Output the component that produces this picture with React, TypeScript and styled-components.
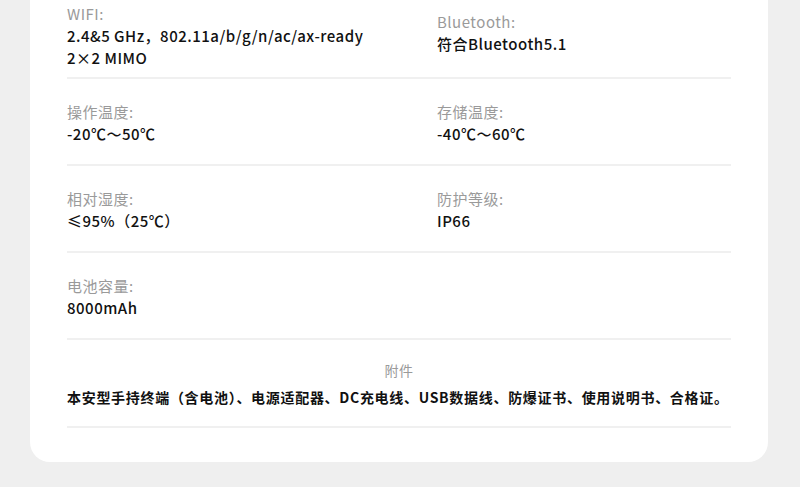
import styled, { createGlobalStyle } from "styled-components";

const GlobalStyle = createGlobalStyle`
  html, body {
    margin: 0;
    padding: 0;
    background-color: #efefef;
  }
  body {
    font-family: "Noto Sans CJK SC", "Noto Sans", sans-serif;
    color: #111;
  }
`;

const Page = styled.div`
  padding: 0 32px 27px 30px;
`;

const Card = styled.div`
  background-color: #ffffff;
  border-radius: 20px;
  margin-top: -20px;
  padding: 20px 37px 34px 37px;
`;

const SpecRow = styled.div<{ first?: boolean }>`
  display: grid;
  grid-template-columns: 370px 1fr;
  align-items: start;
  padding: ${(p) => (p.first ? "3px 0 8px" : "22px 0 19px")};
  border-bottom: 2px solid #f0f0f0;
`;

const Cell = styled.div<{ offset?: number }>`
  display: flex;
  flex-direction: column;
  padding-top: ${(p) => p.offset || 0}px;
`;

const Label = styled.div`
  font-size: 15px;
  line-height: 22px;
  color: #9a9a9a;
  letter-spacing: 0.5px;
`;

const Value = styled.div`
  font-size: 15px;
  line-height: 22px;
  font-weight: 500;
  color: #111;
  letter-spacing: 0.5px;
`;

const Accessory = styled.div`
  display: flex;
  flex-direction: column;
  align-items: stretch;
  padding: 19px 0 17px;
  border-bottom: 2px solid #f0f0f0;
`;

const AccessoryTitle = styled(Label)`
  text-align: center;
  line-height: 23px;
  font-size: 14px;
`;

const AccessoryText = styled.div`
  font-size: 14px;
  line-height: 23px;
  font-weight: 700;
  color: #111;
  letter-spacing: 0.7px;
  margin-top: 4px;
`;

interface ISpec {
  label: string;
  values: string[];
}

const rows: ISpec[][] = [
  [
    { label: "WIFI:", values: ["2.4&5 GHz，802.11a/b/g/n/ac/ax-ready", "2×2 MIMO"] },
    { label: "Bluetooth:", values: ["符合Bluetooth5.1"] },
  ],
  [
    { label: "操作温度:", values: ["-20℃～50℃"] },
    { label: "存储温度:", values: ["-40℃～60℃"] },
  ],
  [
    { label: "相对湿度:", values: ["≤95%（25℃）"] },
    { label: "防护等级:", values: ["IP66"] },
  ],
  [{ label: "电池容量:", values: ["8000mAh"] }],
];

function App() {
  return (
    <Page>
      <GlobalStyle />
      <Card>
        {rows.map((row, i) => (
          <SpecRow key={i} first={i === 0}>
            {row.map((spec, j) => (
              <Cell key={spec.label} offset={i === 0 && j === 1 ? 8 : 0}>
                <Label>{spec.label}</Label>
                {spec.values.map((v) => (
                  <Value key={v}>{v}</Value>
                ))}
              </Cell>
            ))}
          </SpecRow>
        ))}
        <Accessory>
          <AccessoryTitle>附件</AccessoryTitle>
          <AccessoryText>
            本安型手持终端（含电池）、电源适配器、DC充电线、USB数据线、防爆证书、使用说明书、合格证。
          </AccessoryText>
        </Accessory>
      </Card>
    </Page>
  );
}

export default App;
